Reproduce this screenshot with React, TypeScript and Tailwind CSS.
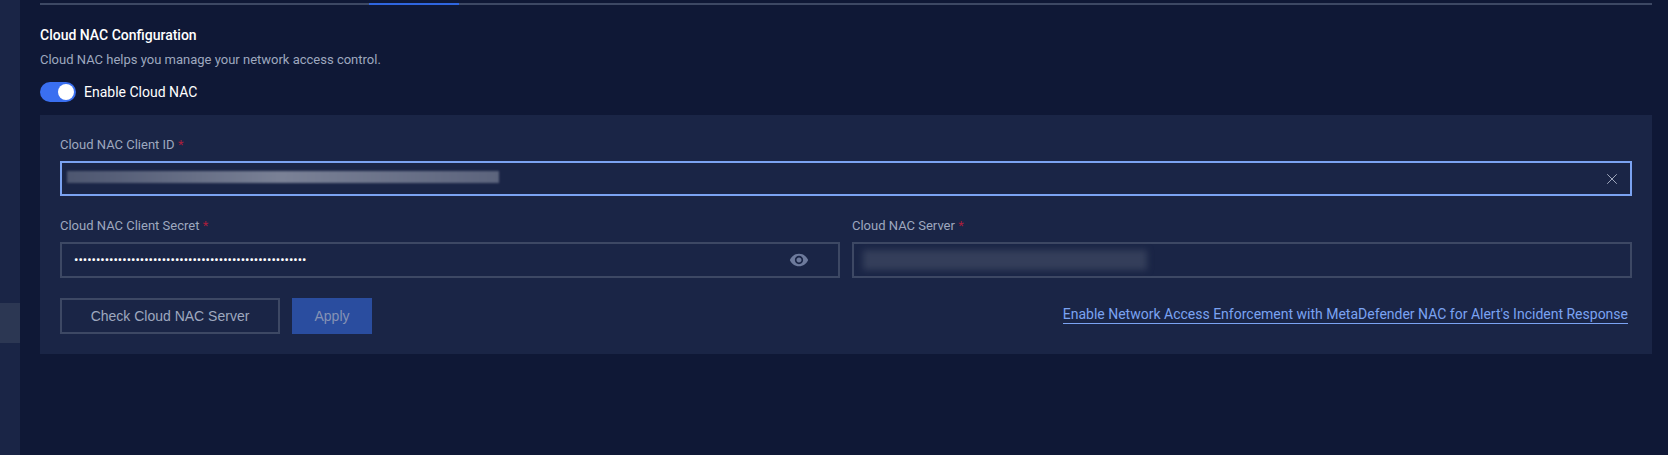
import React from 'react';
import { X } from 'lucide-react';
import { MdVisibility } from 'react-icons/md';

const Label = ({ text }: { text: string }) => (
  <label className="block h-[18px] text-[13px] leading-[20px] text-[#9ea8bf]">
    {text} <span className="text-[#a81e3c]">*</span>
  </label>
);

export default function App() {
  return (
    <div className="flex h-[455px] w-[1668px] overflow-hidden bg-[#0f1836] font-['Roboto',sans-serif]">
      <aside className="w-5 shrink-0 bg-[#1a2546] pt-[303px]">
        <div className="h-10 bg-[#2c3753]" />
      </aside>

      <main className="flex-1 pl-5 pr-4 pt-[3px]">
        <div className="h-[2px] bg-[#3d4864]">
          <div className="ml-[329px] h-[2px] w-[90px] bg-[#2f66e0]" />
        </div>

        <h2 className="mt-5 text-sm font-medium leading-5 text-white">Cloud NAC Configuration</h2>
        <p className="mt-[5px] text-[13px] leading-[19px] text-[#9ea8bf]">Cloud NAC helps you manage your network access control.</p>

        <div className="mt-[13px] flex h-5 items-center gap-2">
          <div className="flex h-5 w-9 items-center justify-end rounded-full bg-[#3a6ff0] pr-0.5">
            <div className="h-4 w-4 rounded-full bg-white" />
          </div>
          <span className="text-sm text-white">Enable Cloud NAC</span>
        </div>

        <section className="mt-[13px] h-[239px] bg-[#1a2546] px-5 pt-5">
          <Label text="Cloud NAC Client ID" />
          <div className="mt-2 flex h-[35px] items-center justify-between border-2 border-[#7ba3f2] pl-[5px] pr-[9px]">
            <div className="-mt-[3px] h-3 w-[432px] bg-gradient-to-r from-[#4d5670] via-[#7a8196] to-[#5c647d] blur-[1px]" />
            <X size={18} strokeWidth={1.2} className="text-[#aeb6c9]" />
          </div>

          <div className="mt-5 grid grid-cols-2 gap-3">
            <div>
              <Label text="Cloud NAC Client Secret" />
              <div className="mt-2 flex h-9 items-center justify-between border-2 border-[#3d4864] pl-3 pr-[29px]">
                <input
                  type="password"
                  readOnly
                  value="12345678901234567890123456789012345678901234567890123"
                  className="-mt-px w-[400px] bg-transparent text-[13px] text-white outline-none"
                />
                <MdVisibility size={20} className="text-[#6d7a9c]" />
              </div>
            </div>
            <div>
              <Label text="Cloud NAC Server" />
              <div className="mt-2 flex h-9 items-center border-2 border-[#3d4864] pl-[9px]">
                <div className="h-5 w-[284px] bg-[#343e5a] blur-[3px]" />
              </div>
            </div>
          </div>

          <div className="mt-5 flex items-center justify-between">
            <div className="flex gap-3">
              <button className="h-9 w-[220px] border-2 border-[#3d4864] font-['Liberation_Sans',sans-serif] text-sm text-[#9ea8bf]">
                Check Cloud NAC Server
              </button>
              <button className="h-9 w-20 bg-[#2a4d9f] font-['Liberation_Sans',sans-serif] text-sm text-[#8592b5]">
                Apply
              </button>
            </div>
            <a className="mb-1 mr-1 border-b border-[#7ba3f2] text-sm leading-[18px] text-[#7ba3f2]">
              Enable Network Access Enforcement with MetaDefender NAC for Alert's Incident Response
            </a>
          </div>
        </section>
      </main>
    </div>
  );
}
